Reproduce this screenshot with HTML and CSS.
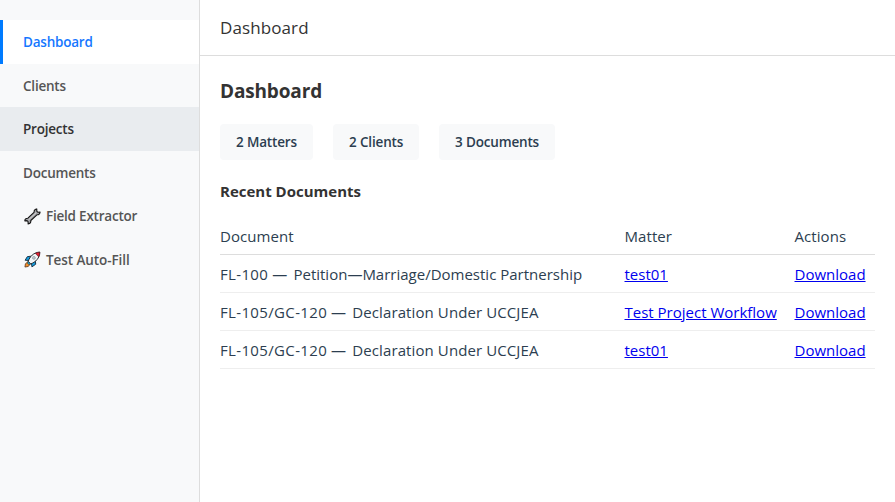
FILE: index.html
```html
<!DOCTYPE html>
<html lang="en">
<head>
<meta charset="utf-8">
<title>Dashboard</title>
<link rel="stylesheet" href="styles.css">
</head>
<body>
<div class="app">
  <nav class="sidebar">
    <a class="nav-item active">Dashboard</a>
    <a class="nav-item">Clients</a>
    <a class="nav-item hovered">Projects</a>
    <a class="nav-item">Documents</a>
    <a class="nav-item"><svg class="nav-icon" viewBox="0 0 18 18" aria-hidden="true">
      <path d="M12.300 1.400 13.500 1l.1 2.600 1.200.9L17 4.300c.1 1.700-1.300 3-3.300 2.900L7.200 13.200c.2 1.900-1 3.400-2.800 3.600l-.1-2.400-1.100-1-2.300.3c-.1-1.700 1.200-3 3.200-2.900l6.500-6.200C10.500 3 11.100 1.900 12.300 1.400z" fill="#a5a5a8" stroke="#151515" stroke-width="1.200" stroke-linejoin="round"/>
      <path d="M5 12.300 12.800 5" stroke="#d4d4d4" stroke-width="1" fill="none"/>
    </svg><span>Field Extractor</span></a>
    <a class="nav-item"><svg class="nav-icon" viewBox="0 0 18 18" aria-hidden="true">
      <path d="M7.500 5.500 3.500 6 1.200 9.800l4 .2zM12 10l.4 4-4 2.800L7.800 12z" fill="#159fe0" stroke="#172f42" stroke-width="1" stroke-linejoin="round"/>
      <path d="M4 11.500 1.500 13.500 1 17l3.500-.6 2-2.500z" fill="#f5902a" stroke="#51301b" stroke-width=".8"/>
      <path d="M4.500 11C6 6 10 1.500 16.700 1.200 16.800 7.500 12 12 7 13.700z" fill="#f2f5f7" stroke="#20262b" stroke-width="1" stroke-linejoin="round"/>
      <path d="M12 2.500c1.400-.8 3-1.200 4.700-1.300.1 1.800-.3 3.500-1.100 5z" fill="#dc2032" stroke="#451019" stroke-width=".6"/>
      <circle cx="10.500" cy="7.300" r="1.500" fill="#c5cdd2" stroke="#77858d" stroke-width=".6"/>
      <path d="m4.500 11 2.500 2.700-2 .6-1.300-1.400z" fill="#17aadd" stroke="#20262b" stroke-width=".6"/>
    </svg><span class="autofill">Test Auto-Fill</span></a>
  </nav>
  <div class="main">
    <header class="topbar"><span class="topbar-title">Dashboard</span></header>
    <main class="content">
      <h1 class="title">Dashboard</h1>
      <div class="stats">
        <div class="stat matters">2 Matters</div>
        <div class="stat clients">2 Clients</div>
        <div class="stat documents">3 Documents</div>
      </div>
      <h2 class="subtitle">Recent Documents</h2>
      <table class="docs">
        <colgroup><col class="col-doc"><col class="col-matter"><col></colgroup>
        <thead><tr><th>Document</th><th>Matter</th><th>Actions</th></tr></thead>
        <tbody>
          <tr><td><span class="code">FL-100</span> <span class="dash">—</span> Petition—Marriage/Domestic Partnership</td><td><a href="#">test01</a></td><td><a href="#">Download</a></td></tr>
          <tr><td><span class="code">FL-105/GC-120</span> <span class="dash">—</span> <span class="name">Declaration Under UCCJEA</span></td><td><a href="#">Test Project Workflow</a></td><td><a href="#">Download</a></td></tr>
          <tr><td><span class="code">FL-105/GC-120</span> <span class="dash">—</span> <span class="name">Declaration Under UCCJEA</span></td><td><a href="#">test01</a></td><td><a href="#">Download</a></td></tr>
        </tbody>
      </table>
    </main>
  </div>
</div>
</body>
</html>
```
FILE: styles.css
```css
* { box-sizing: border-box; }
body {
  margin: 0;
  background: #fff;
  color: #2c3e50;
  font-family: "Open Sans", "Noto Sans", sans-serif;
}
.app { display: flex; height: 502px; overflow: hidden; }
.sidebar {
  width: 200px;
  flex: none;
  padding-top: 20px;
  background: #f8f9fa;
  border-right: 1px solid #ddd;
}
.nav-item {
  display: flex;
  align-items: center;
  height: 43.500px;
  padding: 1px 0 0 20px;
  border-left: 3px solid transparent;
  color: #555;
  font-size: 13.500px;
  font-weight: 600;
  letter-spacing: -0.22px;
}
.nav-item.active { background: #fff; border-left-color: #007bff; color: #1677ff; }
.nav-item.hovered { background: #e9ecef; border-left-color: #e9ecef; color: #333; }
.nav-icon { width: 17px; height: 17px; margin: 0 5px 0 1px; }
.autofill { letter-spacing: -0.08px; }
.main { flex: 1; min-width: 0; }
.topbar {
  display: flex;
  align-items: center;
  height: 56px;
  padding: 0 20px;
  border-bottom: 1px solid #ddd;
}
.topbar-title { font-size: 17px; font-weight: 500; letter-spacing: 0.1px; color: #333; }
.content { padding: 20px; }
.title { margin: 0; font-size: 19px; line-height: 30px; font-weight: 700; letter-spacing: -0.15px; color: #333; }
.stats { display: flex; gap: 20px; margin-top: 18px; }
.stat {
  height: 36px;
  padding-left: 16px;
  border-radius: 4px;
  background: #f8f9fa;
  font-size: 13.500px;
  line-height: 36px;
  font-weight: 600;
  letter-spacing: -0.16px;
}
.matters { width: 93px; }
.clients { width: 86px; }
.documents { width: 116px; }
.subtitle { margin: 19px 0 0; font-size: 15px; line-height: 24px; font-weight: 700; color: #333; }
.docs {
  width: 655px;
  margin-top: 13px;
  table-layout: fixed;
  border-collapse: collapse;
  font-size: 15px;
  line-height: 21px;
}
.col-doc { width: 404.500px; }
.col-matter { width: 170px; }
.docs th, .docs td {
  height: 38px;
  padding: 2px 0 0;
  border-bottom: 1px solid #eee;
  text-align: left;
  font-weight: 400;
  white-space: nowrap;
}
.docs th { padding-top: 3px; letter-spacing: 0.08px; border-bottom-color: #ddd; }
.docs a { color: #0000ee; text-decoration: underline; }
.code { letter-spacing: 0.35px; }
.dash { letter-spacing: 2.400px; }
.name { letter-spacing: 0.1px; }
```
